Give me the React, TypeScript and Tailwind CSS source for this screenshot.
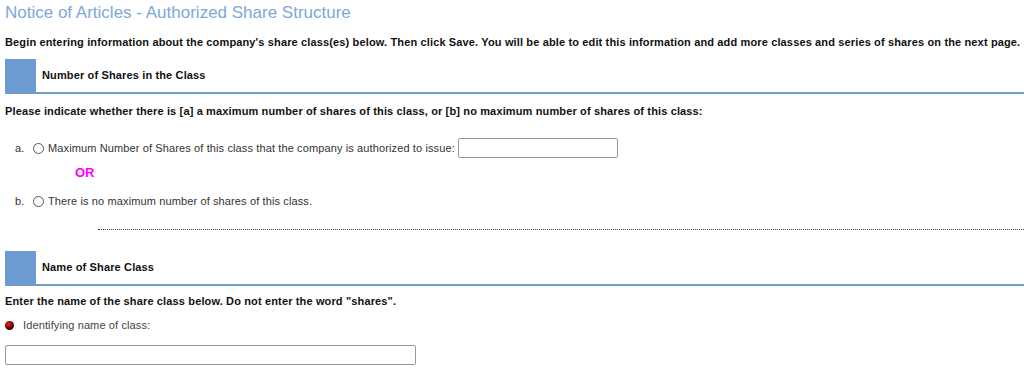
import React from 'react'

function SectionHeader({ title }: { title: string }) {
  return (
    <div className="ml-[5px] flex h-[35px] items-center border-b-2 border-[#6f9dd1]">
      <div className="h-full w-[31px] bg-[#6b9bd0]" />
      <span className="ml-[6px] text-[11px] font-bold tracking-[0.14px] text-[#111]">{title}</span>
    </div>
  )
}

function Radio() {
  return <span className="inline-block h-[11px] w-[11px] rounded-full border border-[#555] bg-white" />
}

export default function App() {
  return (
    <div className="h-[368px] w-[1024px] overflow-hidden bg-white font-['Liberation_Sans',Arial,sans-serif] text-[#333]">
      {/* Title */}
      <h1 className="pl-[5px] pt-[1px] text-[17px] leading-[24px] text-[#7ea7d8]">
        Notice of Articles - Authorized Share Structure
      </h1>

      <p className="mt-[10px] pl-[5px] text-[11px] font-bold leading-[14px] tracking-[0.14px] text-[#111]">
        Begin entering information about the company's share class(es) below. Then click Save. You will be able to edit this information and add more classes and series of shares on the next page.
      </p>

      <div className="mt-[10px]">
        <SectionHeader title="Number of Shares in the Class" />
      </div>

      <p className="mt-[10px] pl-[5px] text-[11px] font-bold leading-[14px] tracking-[0.14px] text-[#111]">
        Please indicate whether there is [a] a maximum number of shares of this class, or [b] no maximum number of shares of this class:
      </p>

      {/* Option a */}
      <div className="mt-[19px] flex h-[22px] items-center text-[11px] tracking-[0.12px]">
        <span className="w-[33px] pl-[15px]">a.</span>
        <Radio />
        <span className="ml-[4px]">Maximum Number of Shares of this class that the company is authorized to issue:</span>
        <input type="text" className="ml-[3px] h-[20px] w-[160px] rounded-[2px] border border-[#999] bg-white" />
      </div>

      <div className="mt-[5px] pl-[75px] text-[13px] font-bold leading-[18px] text-[#ff00ff]">OR</div>

      {/* Option b */}
      <div className="mt-[11px] flex h-[16px] items-center text-[11px] tracking-[0.12px]">
        <span className="w-[33px] pl-[15px]">b.</span>
        <Radio />
        <span className="ml-[4px]">There is no maximum number of shares of this class.</span>
      </div>

      <div className="ml-[98px] mt-[20px] border-t border-dotted border-[#444]" />

      <div className="mt-[21px]">
        <SectionHeader title="Name of Share Class" />
      </div>

      <p className="mt-[8px] pl-[5px] text-[11px] font-bold leading-[14px] tracking-[0.14px] text-[#111]">
        Enter the name of the share class below. Do not enter the word "shares".
      </p>

      <div className="mt-[10px] flex h-[14px] items-center text-[11px] tracking-[0.12px]">
        <span className="ml-[5px] h-[9px] w-[9px] rounded-full bg-[radial-gradient(circle_at_40%_35%,#ff2020,#5a0000_55%,#000)]" />
        <span className="ml-[9px] text-[#444]">Identifying name of class:</span>
      </div>

      <input type="text" className="ml-[5px] mt-[13px] block h-[20px] w-[411px] rounded-[2px] border border-[#999] bg-white" />
    </div>
  )
}
